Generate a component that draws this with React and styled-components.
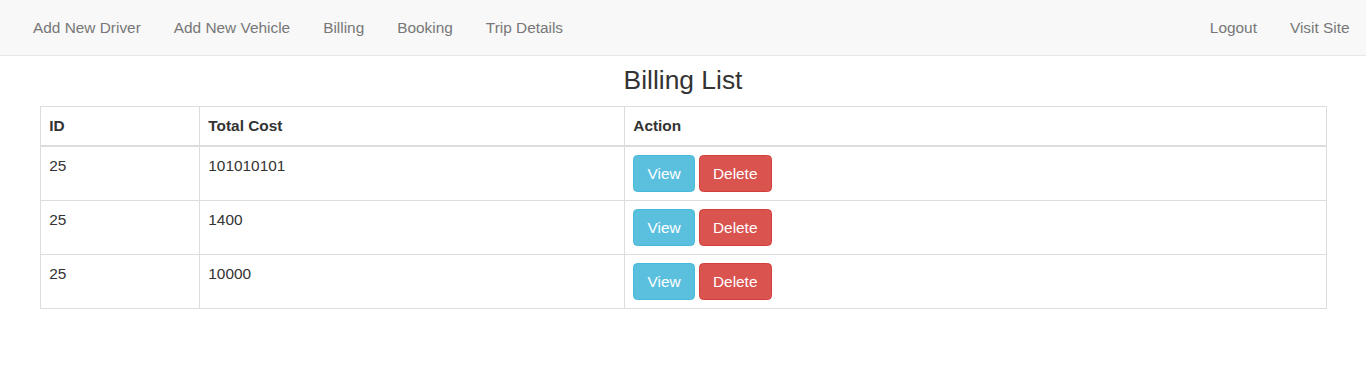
import React from "react";
import styled, { createGlobalStyle } from "styled-components";

const GlobalStyle = createGlobalStyle`
  html, body { margin: 0; padding: 0; background: #fff; }
  body {
    font-family: "Liberation Sans", Arial, Helvetica, sans-serif;
    font-size: 15.4px;
    line-height: 22px;
    color: #333;
  }
  * { box-sizing: border-box; }
`;

const Navbar = styled.nav`
  height: 56px;
  background: #f8f8f8;
  border-bottom: 1px solid #e7e7e7;
  display: flex;
  justify-content: space-between;
  align-items: stretch;
  padding: 0 0 0 16.5px;
`;

const NavGroup = styled.ul`
  display: flex;
  list-style: none;
  margin: 0;
  padding: 0;
`;

const NavLink = styled.a`
  display: block;
  padding: 16.5px 16.5px;
  line-height: 22px;
  font-size: 15.4px;
  color: #777;
  text-decoration: none;
`;

const Container = styled.main`
  width: 1287px;
  margin: 0 auto;
`;

const Title = styled.h3`
  margin: 10px 0 11px;
  font-size: 26.4px;
  line-height: 29px;
  font-weight: 500;
  text-align: center;
  color: #333;
`;

const Table = styled.table`
  width: 100%;
  border-collapse: collapse;
  border: 1px solid #ddd;
`;

const Th = styled.th`
  text-align: left;
  font-weight: bold;
  padding: 8px 8.8px;
  line-height: 22px;
  border: 1px solid #ddd;
  border-bottom: 2px solid #ddd;
  width: ${(p) => p.$w || "auto"};
`;

const Td = styled.td`
  padding: 8px 8.8px;
  line-height: 22px;
  vertical-align: top;
  border: 1px solid #ddd;
`;

const Button = styled.button`
  display: inline-block;
  font-family: inherit;
  font-size: 15.4px;
  line-height: 22px;
  padding: 6.5px 13.2px;
  border-radius: 4.4px;
  border: 1px solid ${(p) => (p.$variant === "danger" ? "#d43f3a" : "#46b8da")};
  background: ${(p) => (p.$variant === "danger" ? "#d9534f" : "#5bc0de")};
  color: #fff;
  cursor: pointer;
  & + & { margin-left: 4px; }
`;

const rows = [
  { id: 25, cost: "101010101" },
  { id: 25, cost: "1400" },
  { id: 25, cost: "10000" },
];

export default function App() {
  return (
    <>
      <GlobalStyle />
      <Navbar>
        <NavGroup>
          <li><NavLink href="#">Add New Driver</NavLink></li>
          <li><NavLink href="#">Add New Vehicle</NavLink></li>
          <li><NavLink href="#">Billing</NavLink></li>
          <li><NavLink href="#">Booking</NavLink></li>
          <li><NavLink href="#">Trip Details</NavLink></li>
        </NavGroup>
        <NavGroup>
          <li><NavLink href="#">Logout</NavLink></li>
          <li><NavLink href="#">Visit Site</NavLink></li>
        </NavGroup>
      </Navbar>
      <Container>
        <Title>Billing List</Title>
        <Table>
          <thead>
            <tr>
              <Th $w="159px">ID</Th>
              <Th $w="425px">Total Cost</Th>
              <Th>Action</Th>
            </tr>
          </thead>
          <tbody>
            {rows.map((r, i) => (
              <tr key={i}>
                <Td>{r.id}</Td>
                <Td>{r.cost}</Td>
                <Td>
                  <Button>View</Button>
                  <Button $variant="danger">Delete</Button>
                </Td>
              </tr>
            ))}
          </tbody>
        </Table>
      </Container>
    </>
  );
}
